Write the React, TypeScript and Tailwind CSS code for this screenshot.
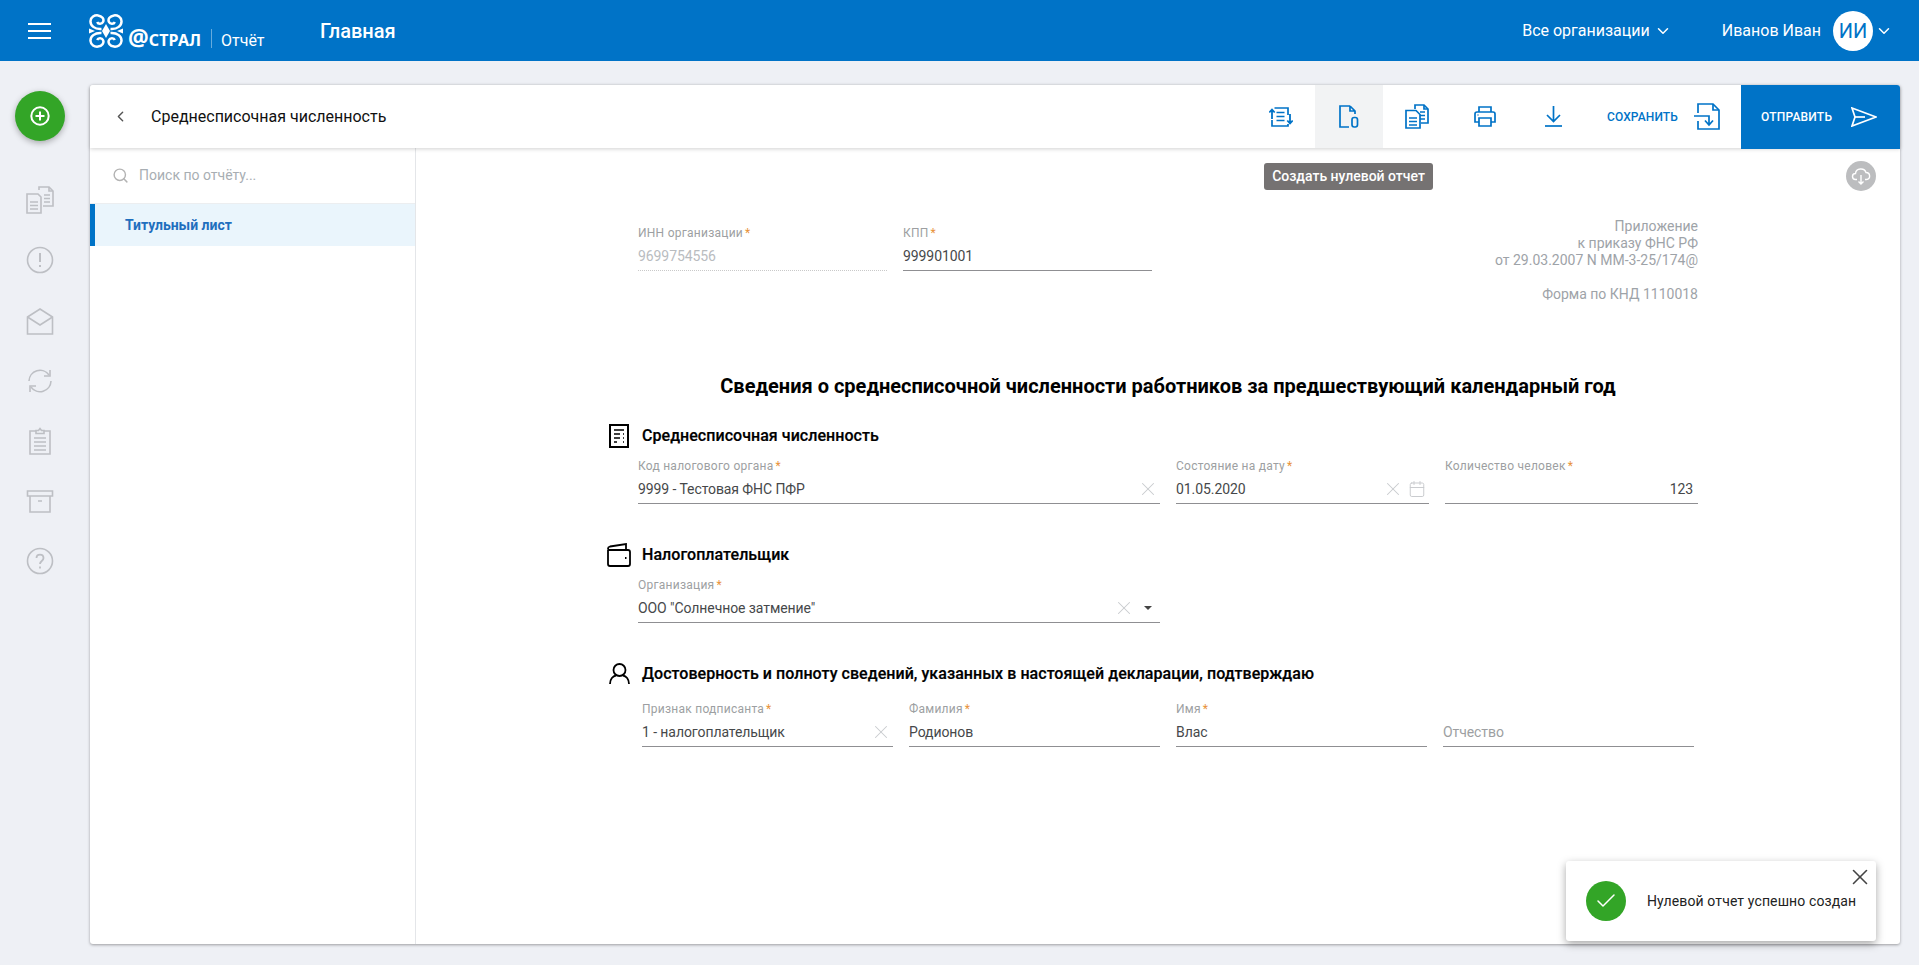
import React from 'react';
import { ChevronDown, ChevronLeft, Search, X, Calendar, Check } from 'lucide-react';

const BLUE = '#0073c7';

function Logo() {
  // four swirls around a diamond
  const swirl = 'M12.5 15 C5.5 15.5 1.2 11.5 1.5 7 C1.8 3 5.5 1 9 1.4 C13 1.9 15.5 5 14 8 C13 10.2 9.2 10.6 8.2 8';
  return (
    <svg width="34" height="34" viewBox="0 0 34 34" fill="none" stroke="white" strokeWidth="2.5">
      <path d={swirl} />
      <path d={swirl} transform="matrix(-1 0 0 1 34 0)" />
      <path d={swirl} transform="matrix(1 0 0 -1 0 34)" />
      <path d={swirl} transform="matrix(-1 0 0 -1 34 34)" />
      <path d="M17 10 L21 17 L17 24 L13 17 Z" fill="white" stroke="none" />
      <path d="M0 14.5 L6 17 L0 19.5 Z M34 14.5 L28 17 L34 19.5 Z" fill="white" stroke="none" />
    </svg>
  );
}

function Hamburger() {
  return (
    <div className="flex w-[23px] flex-col gap-[5px]">
      <div className="h-[2px] bg-white" />
      <div className="h-[2px] bg-white" />
      <div className="h-[2px] bg-white" />
    </div>
  );
}

function Header() {
  return (
    <header className="flex h-[61px] shrink-0 items-center bg-[#0073c7] text-white">
      <div className="ml-[28px]">
        <Hamburger />
      </div>
      <div className="ml-[38px] flex h-[34px] w-[180px] shrink-0 items-end self-center">
        <Logo />
        <span className="ml-[5px] flex w-[74px] shrink-0 items-baseline font-['Noto_Sans',sans-serif] font-bold leading-[15px]">
          <span className="text-[23px] leading-[15px]">@</span>
          <span className="text-[16px] tracking-[0.2px]">СТРАЛ</span>
        </span>
        <div className="mx-[9px] h-[19px] w-px shrink-0 bg-[#66abdd]" />
        <span className="text-[16px] leading-[15px]">Отчёт</span>
      </div>
      <div className="ml-[51px] text-[20px] font-medium">Главная</div>
      <div className="ml-auto flex items-center text-[16px]">
        <span>Все организации</span>
        <ChevronDown className="ml-[4px] h-[18px] w-[18px]" strokeWidth={2} />
        <span className="ml-[50px]">Иванов Иван</span>
        <div className="ml-[12px] flex h-[40px] w-[40px] items-center justify-center rounded-full bg-white text-[20px] text-[#0073c7]">
          ИИ
        </div>
        <ChevronDown className="ml-[2px] mr-[26px] h-[18px] w-[18px]" strokeWidth={2} />
      </div>
    </header>
  );
}

const railProps = {
  fill: 'none',
  stroke: '#bdbfc4',
  strokeWidth: 1.6,
  width: 28,
  height: 28,
  viewBox: '0 0 28 28',
};

function RailIcons() {
  return (
    <>
      <div className="flex h-[60px] items-center justify-center">
        <svg {...railProps}>
          <path d="M13 4 V1 H23 L27 5 V20 H17" />
          <path d="M23 1 V5 H27 M18 9 H24 M18 12.5 H24 M18 16 H24" />
          <path d="M1 8 H12 L15 11 V27 H1 Z" />
          <path d="M4 16 H12 M4 19.5 H12 M4 23 H12" />
        </svg>
      </div>
      <div className="flex h-[60px] items-center justify-center">
        <svg {...railProps}>
          <circle cx="14" cy="14" r="12.5" />
          <path d="M14 7 V16 M14 19 V21" strokeWidth="2" />
        </svg>
      </div>
      <div className="flex h-[61px] items-center justify-center">
        <svg {...railProps}>
          <path d="M1.5 10 L14 2 L26.5 10 V27 H1.5 Z" />
          <path d="M1.5 10 L14 18 L26.5 10" />
        </svg>
      </div>
      <div className="flex h-[60px] items-center justify-center">
        <svg {...railProps}>
          <path d="M3 14 A11 11 0 0 1 23 8 M25 14 A11 11 0 0 1 5 20" />
          <path d="M24 3 V9 H18 M4 25 V19 H10" />
        </svg>
      </div>
      <div className="flex h-[60px] items-center justify-center">
        <svg {...railProps}>
          <path d="M10 4 H4 V27 H24 V4 H18" />
          <path d="M10 6.5 V3.5 H12.5 L14 1.5 L15.5 3.5 H18 V6.5 Z" />
          <path d="M8 11 H20 M8 15 H20 M8 19 H20 M8 23 H20" />
        </svg>
      </div>
      <div className="flex h-[60px] items-center justify-center">
        <svg {...railProps}>
          <path d="M1.5 4 H26.5 V9 H1.5 Z" />
          <path d="M4 9 V25 H24 V9 M12 14 H16" />
        </svg>
      </div>
      <div className="flex h-[60px] items-center justify-center">
        <svg {...railProps}>
          <circle cx="14" cy="14" r="12.5" />
          <path d="M10.5 11 C10.5 6.5 17.5 6.5 17.5 11 C17.5 14 14 14 14 17 M14 19.5 V21.5" strokeWidth="1.8" />
        </svg>
      </div>
    </>
  );
}

function Rail() {
  return (
    <aside className="flex w-[90px] shrink-0 flex-col items-center pr-[10px] pt-[30px]">
      <button className="flex h-[50px] w-[50px] items-center justify-center rounded-full bg-[#33a527] shadow-[0_2px_6px_rgba(0,0,0,0.3)]">
        <svg width="20" height="20" viewBox="0 0 20 20" fill="none" stroke="white" strokeWidth="2">
          <circle cx="10" cy="10" r="8.7" />
          <path d="M10 5.5 V14.5 M5.5 10 H14.5" />
        </svg>
      </button>
      <div className="mt-[29px] w-full">
        <RailIcons />
      </div>
    </aside>
  );
}

const toolProps = { fill: 'none', stroke: BLUE, strokeWidth: 1.7 };

function Toolbar() {
  return (
    <div className="relative z-10 flex h-[63px] shrink-0 items-center rounded-t-[3px] bg-white shadow-[0_1px_4px_rgba(0,0,0,0.18)]">
      <ChevronLeft className="ml-[22px] h-[17px] w-[17px] text-[#555]" strokeWidth={2} />
      <span className="ml-[22px] text-[16px] text-[#111]">Среднесписочная численность</span>
      <div className="ml-auto flex h-full items-stretch">
        <button className="flex w-[68px] items-center justify-center">
          <svg width="24" height="20" viewBox="0 0 24 20" {...toolProps}>
            <path d="M5.5 1 H19 V8 M3 13 V19 H19 V17" />
            <path d="M3 3 V12 M0.3 5.5 L3 2.5 L5.7 5.5" strokeWidth="1.8" />
            <path d="M21 7 V16 M18.3 13.5 L21 16.5 L23.7 13.5" strokeWidth="1.8" />
            <path d="M7.5 5.5 H15.5 M7.5 9.5 H15.5 M7.5 13.5 H15.5" />
          </svg>
        </button>
        <button className="flex w-[68px] items-center justify-center bg-[#f2f3f4]">
          <svg width="20" height="23" viewBox="0 0 20 23" {...toolProps}>
            <path d="M11 1 H1 V22 H10" />
            <path d="M11 1 L16 6 V9 M11 1 V6 H16" />
            <rect x="13" y="12.5" width="5.5" height="9.5" rx="2.2" />
          </svg>
        </button>
        <button className="flex w-[68px] items-center justify-center">
          <svg width="24" height="25" viewBox="0 0 24 25" {...toolProps}>
            <path d="M10 5 V1 H19 L23 5 V19 H16" />
            <path d="M19 1 V5 H23 M15 8 H20 M15 11.5 H20 M15 15 H20" />
            <path d="M1 6.5 H11 L15 10.5 V24 H1 Z" />
            <path d="M4 14 H12 M4 17.5 H12 M4 21 H12" />
          </svg>
        </button>
        <button className="flex w-[68px] items-center justify-center">
          <svg width="22" height="21" viewBox="0 0 22 21" {...toolProps}>
            <path d="M5 6 V1 H17 V6" />
            <path d="M5 16 H1 V8 Q1 6 3 6 H19 Q21 6 21 8 V16 H17" />
            <path d="M5 12 H17 V20 H5 Z" />
            <path d="M3.5 9 H4.5" strokeWidth="1.5" />
          </svg>
        </button>
        <button className="flex w-[68px] items-center justify-center">
          <svg width="17" height="21" viewBox="0 0 17 21" {...toolProps}>
            <path d="M8.5 0 V15 M2 9 L8.5 15.5 L15 9" />
            <path d="M0 20 H17" />
          </svg>
        </button>
        <button className="flex w-[154px] items-center gap-[16px] px-[20px] text-[12px] font-medium tracking-[0.1px] text-[#0073c7]">
          <span>СОХРАНИТЬ</span>
          <svg width="26" height="27" className="shrink-0" viewBox="0 0 26 27" {...toolProps}>
            <path d="M4 10 V1 H19 L25 7 V26 H4 V18" />
            <path d="M19 1 V7 H25" />
            <path d="M0 13 H15 V21 M11 17.5 L15 22 L19 17.5" />
          </svg>
        </button>
        <button className="flex h-[64px] w-[159px] items-center justify-between rounded-tr-[3px] bg-[#0073c7] pl-[20px] pr-[23px] text-[12px] font-medium tracking-[0.2px] text-white">
          <span>ОТПРАВИТЬ</span>
          <svg width="26" height="20" viewBox="0 0 26 20" fill="none" stroke="white" strokeWidth="1.7">
            <path d="M1 1 L25 10 L1 19 L4 10 Z" />
            <path d="M4 10 H14" />
          </svg>
        </button>
      </div>
    </div>
  );
}

function ReportNav() {
  return (
    <div className="w-[326px] shrink-0 border-r border-[#e4e6e9]">
      <div className="flex h-[56px] items-center border-b border-[#eceef0] pl-[22px] text-[14px] text-[#a8aeb3]">
        <Search className="h-[17px] w-[17px] text-[#b3b3b3]" strokeWidth={2} />
        <span className="ml-[10px]">Поиск по отчёту...</span>
      </div>
      <div className="flex h-[42px] items-center border-l-[5px] border-[#0073c7] bg-[#eaf5fc] pl-[30px] text-[14px] font-bold text-[#1f6fbe]">
        Титульный лист
      </div>
    </div>
  );
}

type FieldProps = {
  label?: string;
  value?: string;
  required?: boolean;
  muted?: boolean;
  right?: boolean;
  width: string;
  children?: React.ReactNode;
};

function Field({ label, value, required = true, muted, right, width, children }: FieldProps) {
  return (
    <div className={`${width} shrink-0`}>
      <div className="h-[14px] text-[12px] leading-[14px] tracking-[0.25px] text-[#9d9fa2]">
        {label}
        {required && <span className="ml-[2px] text-[#e8923a]">*</span>}
      </div>
      <div
        className={`flex h-[31px] items-center border-b pt-[2px] text-[14px] tracking-[-0.08px] ${
          muted ? 'border-dotted border-[#c9c9c9] text-[#b9bcbf]' : 'border-[#8f8f92] text-[#46484a]'
        } ${right ? 'justify-end pr-[5px]' : ''}`}
      >
        {value && <span className={children ? 'flex-1' : ''}>{value}</span>}
        {children}
      </div>
    </div>
  );
}

function ClearIcon() {
  return <X className="-m-[4px] h-[22px] w-[22px] text-[#c8cbce]" strokeWidth={1.1} />;
}

function SectionTitle({ icon, children }: { icon: React.ReactNode; children: React.ReactNode }) {
  return (
    <div className="flex h-[24px] items-center">
      <div className="ml-[-31px] flex w-[24px] justify-center">{icon}</div>
      <h3 className="ml-[11px] text-[16px] font-medium tracking-[0.05px] text-black [-webkit-text-stroke:0.2px_black]">{children}</h3>
    </div>
  );
}

function ReportForm() {
  return (
    <div className="relative flex-1 overflow-hidden">
      <div className="absolute right-[24px] top-[13px] flex h-[30px] w-[30px] items-center justify-center rounded-full bg-[#bcbdbf]">
        <svg width="20" height="18" viewBox="0 0 20 18" fill="none" stroke="white" strokeWidth="1.4">
          <path d="M6 12.5 H4.5 C0.5 12.5 0.5 6.5 4.5 6.5 C5 1 13.5 0.5 15 5.5 C19.5 5.5 20 12.5 15.5 12.5 H14" />
          <path d="M10 8 V17 M7.5 14.5 L10 17 L12.5 14.5" />
        </svg>
      </div>

      <div className="ml-[222px] w-[1060px] pt-[70px]">
        <div className="flex justify-between">
          <div className="flex gap-[16px] pt-[8px]">
            <Field label="ИНН организации" value="9699754556" muted width="w-[249px]" />
            <Field label="КПП" value="999901001" width="w-[249px]" />
          </div>
          <div className="text-right text-[14px] leading-[17px] text-[#9ea3a8]">
            <div>Приложение</div>
            <div>к приказу ФНС РФ</div>
            <div>от 29.03.2007 N ММ-3-25/174@</div>
            <div className="h-[17px]" />
            <div>Форма по КНД 1110018</div>
          </div>
        </div>

        <h2 className="mt-[71px] text-center text-[20px] font-bold leading-[24px] text-black">
          Сведения о среднесписочной численности работников за предшествующий календарный год
        </h2>

        <div className="mt-[26px]">
          <SectionTitle
            icon={
              <svg width="20" height="24" viewBox="0 0 20 24" fill="none" stroke="black" strokeWidth="2">
                <rect x="1" y="1" width="18" height="22" />
                <path d="M5 6 H15 M5 10 H11 M14 10 H15 M5 14 H11 M14 14 H15 M5 18 H8 M14 18 H15" strokeWidth="1.6" />
              </svg>
            }
          >
            Среднесписочная численность
          </SectionTitle>
          <div className="mt-[11px] flex gap-[16px]">
            <Field label="Код налогового органа" value="9999 - Тестовая ФНС ПФР" width="w-[522px]">
              <div className="mr-[5px] flex">
                <ClearIcon />
              </div>
            </Field>
            <Field label="Состояние на дату" value="01.05.2020" width="w-[253px]">
              <ClearIcon />
              <Calendar className="ml-[8px] mr-[3px] h-[18px] w-[18px] text-[#c8cbce]" strokeWidth={1.3} />
            </Field>
            <Field label="Количество человек" value="123" right width="w-[253px]" />
          </div>
        </div>

        <div className="mt-[39px]">
          <SectionTitle
            icon={
              <svg width="24" height="24" viewBox="0 0 24 24" fill="none" stroke="black" strokeWidth="1.8">
                <path d="M1 7 V21 Q1 23 3 23 H21 Q23 23 23 21 V9 Q23 7 21 7 H3 Q1 7 1 5.5 Q1 4 3 3.5 L19 1 V7" />
                <path d="M18 15 H19.5" strokeWidth="2" />
              </svg>
            }
          >
            Налогоплательщик
          </SectionTitle>
          <div className="mt-[11px]">
            <Field label="Организация" value={'ООО "Солнечное затмение"'} width="w-[522px]">
              <ClearIcon />
              <span className="ml-[13px] mr-[8px] h-0 w-0 border-x-[4px] border-t-[4px] border-x-transparent border-t-[#444]" />
            </Field>
          </div>
        </div>

        <div className="mt-[39px]">
          <SectionTitle
            icon={
              <svg width="21" height="22" viewBox="0 0 21 22" fill="none" stroke="black" strokeWidth="1.8">
                <circle cx="10.5" cy="7" r="6" />
                <path d="M1 21 C1 16 4 13 7 12.5 M20 21 C20 16 17 13 14 12.5" />
              </svg>
            }
          >
            Достоверность и полноту сведений, указанных в настоящей декларации, подтверждаю
          </SectionTitle>
          <div className="mt-[16px] flex gap-[16px] pl-[4px]">
            <Field label="Признак подписанта" value="1 - налогоплательщик" width="w-[251px]">
              <div className="mr-[5px] flex">
                <ClearIcon />
              </div>
            </Field>
            <Field label="Фамилия" value="Родионов" width="w-[251px]" />
            <Field label="Имя" value="Влас" width="w-[251px]" />
            <Field required={false} width="w-[251px]">
              <span className="text-[#9d9fa2]">Отчество</span>
            </Field>
          </div>
        </div>
      </div>
    </div>
  );
}

export default function App() {
  return (
    <div className="flex h-[965px] flex-col overflow-hidden bg-[#eef0f5] font-['Roboto',sans-serif]">
      <Header />
      <div className="flex flex-1">
        <Rail />
        <main className="relative mb-[21px] mr-[19px] mt-[24px] flex flex-1 flex-col rounded-[3px] bg-white shadow-[0_1px_3px_rgba(0,0,0,0.35)]">
          <Toolbar />
          <div className="flex flex-1">
            <ReportNav />
            <ReportForm />
          </div>

          {/* tooltip of the zero-report button */}
          <div className="absolute left-[1174px] top-[78px] z-20 flex h-[27px] w-[169px] items-center justify-center rounded-[3px] bg-[#757272] text-[14px] font-medium text-white">
            Создать нулевой отчет
          </div>

          {/* toast */}
          <div className="absolute bottom-[3px] right-[24px] z-20 flex h-[80px] w-[310px] items-center rounded-[3px] bg-white pl-[20px] shadow-[0_3px_8px_rgba(0,0,0,0.35)]">
            <div className="flex h-[40px] w-[40px] items-center justify-center rounded-full bg-[#33a527]">
              <Check className="h-[24px] w-[24px] text-white" strokeWidth={1.5} />
            </div>
            <span className="ml-[21px] text-[14px] tracking-[0.12px] text-[#222]">Нулевой отчет успешно создан</span>
            <X className="absolute right-[3px] top-[3px] h-[26px] w-[26px] text-[#444]" strokeWidth={1.5} />
          </div>
        </main>
      </div>
    </div>
  );
}
